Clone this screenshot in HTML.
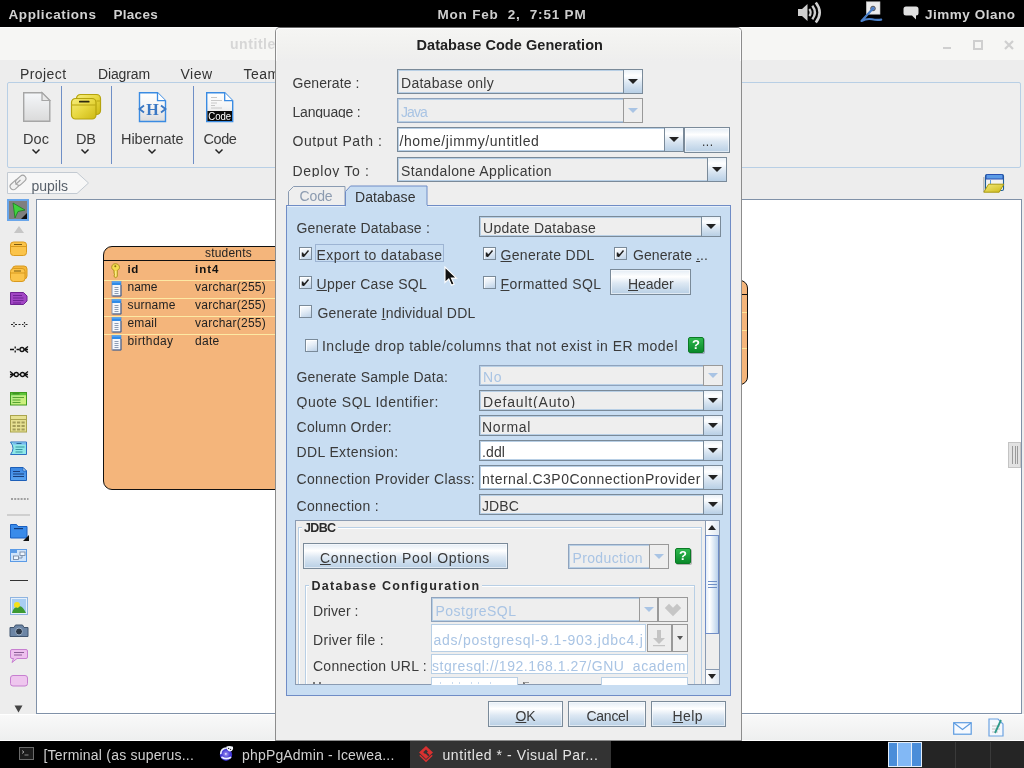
<!DOCTYPE html>
<html><head><meta charset="utf-8"><title>Database Code Generation</title><style>
html,body{margin:0;padding:0}
body{width:1024px;height:768px;position:relative;overflow:hidden;background:#ededed;font-family:"Liberation Sans",sans-serif;font-size:13.5px;color:#3a3a3a}
div,span,svg{box-sizing:border-box}
.a{position:absolute}
u{text-decoration:underline;text-underline-offset:1px}
.grad{background:linear-gradient(#dde8f3 0%,#ffffff 30%,#e6eef7 55%,#b8cfe5 100%)}
.btn{position:absolute;border:1px solid #7a8a99;background:linear-gradient(#e3ecf5 0%,#ffffff 28%,#dde8f3 55%,#b8cfe5 100%);box-shadow:inset 0 0 0 1px rgba(255,255,255,.55)}
.cb{position:absolute;border:1px solid #7a8a99;background:#eeeeee;box-shadow:inset 0 0 0 1px #b8cfe5}
.cb.ed{background:#fff}
.cb.dis{border-color:#8fa3bd}
.ab{position:absolute;top:-1px;right:-1px;bottom:-1px;border:1px solid #7a8a99;background:linear-gradient(#eaf1f8 0%,#ffffff 25%,#dde8f3 55%,#b8cfe5 100%)}
.ab.dis{background:#eeeeee;border-color:#999}
.tri{position:absolute;left:50%;top:50%;width:0;height:0;margin-left:-5px;margin-top:-3px;border-left:5px solid transparent;border-right:5px solid transparent;border-top:5px solid #222}
.tri.dis{border-top-color:#a9c4e4}
.chk{position:absolute;width:13px;height:13px;border:1px solid #7a8a99;background:linear-gradient(160deg,#ffffff 0%,#e6eef7 45%,#bdd2e8 100%);box-shadow:inset 1px 1px 0 rgba(255,255,255,.8)}
.q{position:absolute;width:16px;height:16px;border-radius:2px;background:linear-gradient(#2fb84f,#0a8a2a);border:1px solid #0a7a25;box-shadow:1px 1px 0 rgba(0,0,0,.25);color:#fff;font-weight:bold;font-size:13px;line-height:14px;text-align:center}
</style></head><body><div id="root" style="position:absolute;left:0;top:0;width:1024px;height:768px;will-change:transform"><div style="position:absolute;left:0px;top:0px;width:1024px;height:27px;background:#000"></div><span style="position:absolute;left:8.50px;top:6px;font-size:13.5px;line-height:18px;white-space:pre;color:#d2d2d2;font-weight:bold;letter-spacing:0.582px;">Applications</span><span style="position:absolute;left:113.50px;top:6px;font-size:13.5px;line-height:18px;white-space:pre;color:#d2d2d2;font-weight:bold;letter-spacing:0.284px;">Places</span><span style="position:absolute;left:437.50px;top:6px;font-size:13.5px;line-height:18px;white-space:pre;color:#cecece;font-weight:bold;letter-spacing:0.811px;">Mon Feb  2,  7:51 PM</span><span style="position:absolute;left:925.00px;top:6px;font-size:13.5px;line-height:18px;white-space:pre;color:#d2d2d2;font-weight:bold;letter-spacing:0.520px;">Jimmy Olano</span><svg class="a" style="left:797px;top:1px" width="26" height="24" viewBox="0 0 26 24"><path d="M1 8h4l5.500-5v17l-5.500-5H1z" fill="#cfcfcf"/><path d="M12.300 8q2.800 3.500 0 7" fill="none" stroke="#cfcfcf" stroke-width="2.200"/><path d="M15.300 4.700q5.200 6.800 0 13.600" fill="none" stroke="#cfcfcf" stroke-width="2.400"/><path d="M18.800 1.500q7.800 10 0 20" fill="none" stroke="#cfcfcf" stroke-width="2.600"/></svg><svg class="a" style="left:859px;top:1px" width="24" height="23" viewBox="0 0 24 23"><rect x="7.300" y=".8" width="13.700" height="12.400" fill="#ececec" stroke="#bdbdbd" stroke-width=".6"/><circle cx="14" cy="7.500" r="2.300" fill="#6a8fd0" stroke="#555" stroke-width="1"/><path d="M14 7.500L2.500 20q5.500-2.800 10.500-1.700t9.200.3" fill="none" stroke="#4a7fc8" stroke-width="2.200" stroke-linecap="round" stroke-linejoin="round"/></svg><svg class="a" style="left:903px;top:6px" width="16" height="15" viewBox="0 0 16 15"><path d="M3 .5h10q2.500 0 2.500 2.500v4q0 2.500-2.500 2.500v4l-4-4H3Q.5 9.500.5 7V3Q.5.5 3 .5z" fill="#e0e0e0"/></svg><div style="position:absolute;left:0px;top:27px;width:1024px;height:33px;background:#f6f6f4;border-top:1px solid #fdfdfd"></div><span style="position:absolute;left:230.00px;top:35px;font-size:14px;line-height:18px;white-space:pre;color:#d6d6d6;font-weight:bold;letter-spacing:0.557px;">untitled</span><div style="position:absolute;left:943px;top:47px;width:8px;height:2px;background:#cfcfcf"></div><div style="position:absolute;left:973px;top:40px;width:10px;height:10px;border:2px solid #cfcfcf"></div><svg class="a" style="left:1003px;top:39px" width="12" height="12" viewBox="0 0 12 12"><path d="M2 2l8 8M10 2l-8 8" stroke="#cfcfcf" stroke-width="2.200" fill="none"/></svg><div style="position:absolute;left:0px;top:60px;width:1024px;height:681px;background:#ededed"></div><div style="position:absolute;left:7px;top:82px;width:1014px;height:86px;border:1px solid #b8cfe5;border-radius:2px;background:#eeeeee"></div><span style="position:absolute;left:20.00px;top:65px;font-size:14px;line-height:18px;white-space:pre;color:#333;letter-spacing:0.417px;">Project</span><span style="position:absolute;left:98.00px;top:65px;font-size:14px;line-height:18px;white-space:pre;color:#333;letter-spacing:-0.129px;">Diagram</span><span style="position:absolute;left:180.50px;top:65px;font-size:14px;line-height:18px;white-space:pre;color:#333;letter-spacing:0.477px;">View</span><span style="position:absolute;left:243.50px;top:65px;font-size:14px;line-height:18px;white-space:pre;color:#333;letter-spacing:0.441px;">Team</span><div style="position:absolute;left:61px;top:86px;width:1px;height:78px;background:#6f8fc6"></div><div style="position:absolute;left:111px;top:86px;width:1px;height:78px;background:#6f8fc6"></div><div style="position:absolute;left:193px;top:86px;width:1px;height:78px;background:#6f8fc6"></div><svg class="a" style="left:22px;top:91px" width="30" height="32" viewBox="0 0 30 32"><defs><linearGradient id="gdoc" x1="0" y1="0" x2="0" y2="1"><stop offset="0" stop-color="#f5f7fa"/><stop offset="1" stop-color="#dadada"/></linearGradient><linearGradient id="gdb" x1="0" y1="0" x2="1" y2="1"><stop offset="0" stop-color="#f6ec7c"/><stop offset=".5" stop-color="#e8d840"/><stop offset="1" stop-color="#cdb914"/></linearGradient><linearGradient id="gpg" x1="0" y1="0" x2="0" y2="1"><stop offset="0" stop-color="#ffffff"/><stop offset=".5" stop-color="#f4f4f4"/><stop offset="1" stop-color="#dcdcdc"/></linearGradient></defs><path d="M1.700 1.700h18.300l7.800 7.800v20.800h-26.100z" fill="url(#gdoc)" stroke="#a6a6a6" stroke-width="1.400"/><path d="M20 1.700v7.800h7.800z" fill="#e9e9e9" stroke="#a6a6a6" stroke-width="1.200"/></svg><svg class="a" style="left:70px;top:93px" width="32" height="28" viewBox="0 0 32 28"><rect x="6.500" y="1.500" width="24" height="20" rx="4" fill="url(#gdb)" stroke="#b5a30e" stroke-width="1.200"/><rect x="1.500" y="5.500" width="24.500" height="20.500" rx="4" fill="url(#gdb)" stroke="#b5a30e" stroke-width="1.200"/><path d="M1.500 12h24.500" stroke="#bfae1a" stroke-width="1.200"/><path d="M26.500 8h4" stroke="#bfae1a" stroke-width="1.200"/><rect x="9" y="7.700" width="10.500" height="1.800" rx=".6" fill="#2e2a10"/></svg><svg class="a" style="left:137px;top:91px" width="32" height="32" viewBox="0 0 32 32"><path d="M2.500 1.700h18l8 8v20.800h-26z" fill="url(#gpg)" stroke="#3a8be2" stroke-width="1.400"/><path d="M20.500 1.700v8h8" fill="#fff" stroke="#3a8be2" stroke-width="1.300"/><text x="15.500" y="23.500" font-family="Liberation Serif,serif" font-weight="bold" font-size="16" fill="#3a78c4" text-anchor="middle">H</text><path d="M7 14.500l-4.500 3.500 4.500 3.500M24 14.500l4.500 3.500-4.500 3.500" fill="none" stroke="#3a78c4" stroke-width="1.800"/></svg><svg class="a" style="left:205px;top:91px" width="30" height="32" viewBox="0 0 30 32"><path d="M1.700 1.700h18l8 8v20.800h-26z" fill="url(#gpg)" stroke="#3a8be2" stroke-width="1.400"/><path d="M19.700 1.700v8h8" fill="#fff" stroke="#3a8be2" stroke-width="1.300"/><path d="M6 6.500h6M6 9.500h11M6 12h6M6 14.500h4M6 17h11" stroke="#c2c2c2" stroke-width=".9"/><rect x="2.400" y="20" width="24.600" height="10" fill="#0a0a0a"/><text x="14.700" y="28.800" font-family="Liberation Sans,sans-serif" font-size="10.500" fill="#fff" text-anchor="middle" textLength="23" lengthAdjust="spacingAndGlyphs">Code</text></svg><span style="position:absolute;left:23.00px;top:130px;font-size:14.5px;line-height:19px;white-space:pre;color:#3a3a3a;letter-spacing:0.068px;">Doc</span><span style="position:absolute;left:76.00px;top:130px;font-size:14.5px;line-height:19px;white-space:pre;color:#3a3a3a;letter-spacing:-0.328px;">DB</span><span style="position:absolute;left:121.00px;top:130px;font-size:14.5px;line-height:19px;white-space:pre;color:#3a3a3a;letter-spacing:-0.042px;">Hibernate</span><span style="position:absolute;left:203.50px;top:130px;font-size:14.5px;line-height:19px;white-space:pre;color:#3a3a3a;letter-spacing:-0.418px;">Code</span><svg class="a" style="left:30.5px;top:148px" width="10" height="7" viewBox="0 0 10 7"><path d="M1.500 1.500L5 5l3.500-3.500" fill="none" stroke="#222" stroke-width="1.500"/></svg><svg class="a" style="left:80px;top:148px" width="10" height="7" viewBox="0 0 10 7"><path d="M1.500 1.500L5 5l3.500-3.500" fill="none" stroke="#222" stroke-width="1.500"/></svg><svg class="a" style="left:146.5px;top:148px" width="10" height="7" viewBox="0 0 10 7"><path d="M1.500 1.500L5 5l3.500-3.500" fill="none" stroke="#222" stroke-width="1.500"/></svg><svg class="a" style="left:213.5px;top:148px" width="10" height="7" viewBox="0 0 10 7"><path d="M1.500 1.500L5 5l3.500-3.500" fill="none" stroke="#222" stroke-width="1.500"/></svg><svg class="a" style="left:7px;top:172px" width="84" height="23" viewBox="0 0 84 23"><path d="M.5.500h69.500l11.500 10.500-11.500 10.500H.5z" fill="#f7f7f7" stroke="#c3cad2"/><g fill="#f1f1f1" stroke="#a2a2a2" stroke-width="1.100"><rect x="2.500" y="9.500" width="11.500" height="6.500" rx="3.200" transform="rotate(-42 8.200 12.700)"/><rect x="8" y="5" width="11.500" height="6.500" rx="3.200" transform="rotate(-42 13.700 8.200)"/></g><path d="M8.500 12.500l5-4.500" stroke="#a2a2a2" stroke-width="1.100"/></svg><span style="position:absolute;left:31.50px;top:177px;font-size:14px;line-height:18px;white-space:pre;color:#58606a;letter-spacing:-0.016px;">pupils</span><svg class="a" style="left:982px;top:173px" width="24" height="22" viewBox="0 0 24 22"><defs><linearGradient id="gnav" x1="0" y1="0" x2="1" y2="1"><stop offset="0" stop-color="#f3ea7a"/><stop offset="1" stop-color="#cdb91a"/></linearGradient></defs><path d="M1.800 4v15" stroke="#b8b8b8" stroke-width="1.400"/><rect x="3.500" y="1.500" width="18" height="16" rx="1.500" fill="#f2f2f2" stroke="#1f5f96" stroke-width="1.100"/><path d="M4 6V3q0-1.500 1.500-1.500h14q1.500 0 1.500 1.500v3z" fill="#5b9be6" stroke="#2a4fb0"/><path d="M8.500 7v4" stroke="#5b9be6"/><path d="M1.800 19.200l4.800-8h15.200l-4.600 8z" fill="url(#gnav)" stroke="#a89a10"/></svg><div style="position:absolute;left:7px;top:199px;width:22px;height:22px;background:#7f7f7f;border:2px solid #6aa6ea"></div><svg class="a" style="left:9px;top:201px" width="20" height="20" viewBox="0 0 20 20"><path d="M4 2l12 7-7 1.500L6 17z" fill="#3fd23f" stroke="#1d7f1d" stroke-width=".8"/><path d="M18 12v6h-6z" fill="#111"/></svg><svg class="a" style="left:13px;top:225px" width="12" height="9" viewBox="0 0 12 9"><path d="M1 8l5-7 5 7z" fill="#c6c6c6"/></svg><svg class="a" style="left:9px;top:241px" width="20" height="16" viewBox="0 0 20 16"><rect x="1.500" y="1" width="16" height="13.500" rx="3" fill="#fbc44a" stroke="#d99a1e"/><path d="M2 5.500h15" stroke="#d99a1e"/><rect x="5" y="3" width="8" height="1" fill="#7a5a10"/></svg><svg class="a" style="left:9px;top:265px" width="20" height="18" viewBox="0 0 20 18"><rect x="3.500" y="1" width="14.500" height="13" rx="3" fill="#f4b73a" stroke="#d99a1e"/><rect x="1.500" y="3.500" width="14.500" height="13" rx="3" fill="#fbc44a" stroke="#d99a1e"/><path d="M2 8h14" stroke="#d99a1e"/><rect x="5" y="5.500" width="7" height="1" fill="#7a5a10"/></svg><svg class="a" style="left:9px;top:291px" width="20" height="16" viewBox="0 0 20 16"><path d="M1.500 1.500h13l3.500 3.500v5l-3.500 3.500h-13z" fill="#a246c4" stroke="#6e2391"/><path d="M4 4.500h9M4 7h10.500M4 9.500h10.500M4 12h8" stroke="#6a2090" stroke-width=".9"/></svg><svg class="a" style="left:9px;top:319px" width="22" height="11" viewBox="0 0 22 11"><path d="M2 5.500h2M6 5.500h2M9.500 5.500h2M13 5.500h1.500M16.500 5.500h2M5 3v1.500M5 6.500v1.500M15.500 3v1.500M15.500 6.500v1.500" stroke="#222" stroke-width="1.200" fill="none"/></svg><svg class="a" style="left:9px;top:344px" width="22" height="11" viewBox="0 0 22 11"><path d="M1 5.500h4M7.500 5.500h3M6.200 2.500v2M6.200 6.500v2M15 5.500h4M15.200 5.500l3.800-3M15.200 5.500l3.800 3" stroke="#111" stroke-width="1.300" fill="none"/><circle cx="13" cy="5.500" r="2" fill="none" stroke="#111" stroke-width="1.300"/></svg><svg class="a" style="left:9px;top:369px" width="22" height="11" viewBox="0 0 22 11"><path d="M1 5.500h4M4.800 5.500l-3.800-3M4.800 5.500l-3.800 3M9.500 5.500h2M15.500 5.500h3.500M15.200 5.500l3.800-3M15.200 5.500l3.800 3" stroke="#111" stroke-width="1.300" fill="none"/><circle cx="7.300" cy="5.500" r="2" fill="none" stroke="#111" stroke-width="1.300"/><circle cx="13.500" cy="5.500" r="2" fill="none" stroke="#111" stroke-width="1.300"/></svg><svg class="a" style="left:9px;top:391px" width="20" height="16" viewBox="0 0 20 16"><defs><linearGradient id="ggr" x1="0" y1="0" x2="1" y2="1"><stop offset="0" stop-color="#a8e88a"/><stop offset="1" stop-color="#d6f27a"/></linearGradient></defs><rect x="1.500" y="1.500" width="16" height="12.500" fill="url(#ggr)" stroke="#3f9a1e"/><rect x="2" y="2" width="15" height="2.200" fill="#5cc43a"/><path d="M3.500 2.800h7" stroke="#2f7a1a" stroke-width=".9"/><path d="M3.500 6.500h11.500M3.500 9h8M3.500 11.500h8" stroke="#4a9a2a" stroke-width=".9"/></svg><svg class="a" style="left:9px;top:414px" width="20" height="20" viewBox="0 0 20 20"><rect x="1.500" y="1.500" width="16" height="16.500" fill="#e6e192" stroke="#aaa44e"/><path d="M2 5.500h15" stroke="#aaa44e"/><g fill="#a39d58"><rect x="3.500" y="7.500" width="3.200" height="2"/><rect x="8" y="7.500" width="3.200" height="2"/><rect x="12.500" y="7.500" width="3.200" height="2"/><rect x="3.500" y="11" width="3.200" height="2"/><rect x="8" y="11" width="3.200" height="2"/><rect x="12.500" y="11" width="3.200" height="2"/><rect x="3.500" y="14.500" width="3.200" height="2"/><rect x="8" y="14.500" width="3.200" height="2"/><rect x="12.500" y="14.500" width="3.200" height="2"/></g></svg><svg class="a" style="left:9px;top:440px" width="20" height="17" viewBox="0 0 20 17"><path d="M1.500 2h16v12.500h-16q5-6.200 0-12.500z" fill="#8fe8e8" stroke="#2b6fc0"/><path d="M3.500 2.500h13.500v2H4.500z" fill="#7ab8f0"/><path d="M7.500 3.500h5" stroke="#1f5a8a" stroke-width=".9"/><path d="M6.500 7h9M6.500 9.500h7M6.500 12h7" stroke="#2a8a9a" stroke-width=".9"/></svg><svg class="a" style="left:9px;top:466px" width="20" height="16" viewBox="0 0 20 16"><defs><linearGradient id="gbl" x1="0" y1="0" x2="0" y2="1"><stop offset="0" stop-color="#3a86e2"/><stop offset="1" stop-color="#5aa4f0"/></linearGradient></defs><path d="M1.500 1.500h12.500l3.500 3.500v9.500h-16z" fill="url(#gbl)" stroke="#1d5fb8"/><path d="M14 1.500v3.500h3.500z" fill="#cfe4fb" stroke="#1d5fb8" stroke-width=".8"/><path d="M4 5.500h7M4 8h11M4 10.500h11" stroke="#1a3f7a" stroke-width="1"/></svg><svg class="a" style="left:10px;top:497px" width="20" height="4" viewBox="0 0 20 4"><path d="M1 2h17.500" stroke="#555" stroke-width="1.200" stroke-dasharray="2 1.200"/></svg><div style="position:absolute;left:7px;top:514px;width:23px;height:2px;background:#cfcfcf"></div><svg class="a" style="left:9px;top:523px" width="21" height="19" viewBox="0 0 21 19"><path d="M1.500 1.500h6l1.500 2h9v11.500h-16.500z" fill="#3a8bea" stroke="#1a5fc0"/><rect x="5" y="5" width="9" height="1.200" fill="#123a7a"/><path d="M20 12v6h-6z" fill="#111"/></svg><svg class="a" style="left:9px;top:548px" width="20" height="16" viewBox="0 0 20 16"><rect x="1.500" y="1.500" width="16" height="12" fill="#cfe4fb" stroke="#5b9be6"/><rect x="2" y="2" width="6" height="3" fill="#5b9be6"/><rect x="4.500" y="8" width="5" height="3.500" fill="#eef6ff" stroke="#6d7f99" stroke-width=".8"/><rect x="11" y="4" width="5" height="3.500" fill="#eef6ff" stroke="#6d7f99" stroke-width=".8"/><path d="M9.500 10h3.500V7.500" fill="none" stroke="#6d7f99" stroke-width=".8"/></svg><div style="position:absolute;left:10px;top:580px;width:18px;height:1px;background:#333"></div><svg class="a" style="left:9px;top:596px" width="20" height="20" viewBox="0 0 20 20"><rect x="1.500" y="1.500" width="17" height="17" fill="#e6f0fb" stroke="#8fb4e0"/><rect x="3" y="3" width="14" height="14" fill="#a8cdf2"/><circle cx="8" cy="9" r="3" fill="#f5e11a"/><path d="M3 17q2-7 6-5 3-5 8 5z" fill="#3c9a32"/></svg><svg class="a" style="left:9px;top:624px" width="20" height="14" viewBox="0 0 20 14"><path d="M1 3.500h4l1.500-2.500h7l1.500 2.500h4v9h-18z" fill="#6d86a6" stroke="#41556f"/><circle cx="10" cy="7.500" r="3.500" fill="#2e3a49" stroke="#9fb2c9"/></svg><svg class="a" style="left:9px;top:648px" width="20" height="17" viewBox="0 0 20 17"><path d="M3 1.500h14q1.500 0 1.500 1.500v6q0 1.500-1.500 1.500H8l-5 4 1.500-4H3q-1.500 0-1.500-1.500v-6q0-1.500 1.500-1.500z" fill="#eec0ee" stroke="#c77fd0"/><path d="M5 4.500h10M5 7h8" stroke="#8a5f95" stroke-width="1"/></svg><svg class="a" style="left:9px;top:674px" width="20" height="14" viewBox="0 0 20 14"><rect x="1.500" y="1.500" width="17" height="10.500" rx="2.500" fill="#eec6ee" stroke="#c77fd0"/></svg><svg class="a" style="left:14px;top:705px" width="10" height="8" viewBox="0 0 10 8"><path d="M.5.500h8L4.500 7.500z" fill="#444"/></svg><div style="position:absolute;left:36px;top:199px;width:986px;height:515px;background:#fff;border:1px solid #8091a8"></div><div style="position:absolute;left:1008px;top:442px;width:13px;height:26px;background:#e2e2e2;border:1px solid #c4c4c4"></div><div style="position:absolute;left:1012px;top:446px;width:1px;height:18px;background:#9a9a9a"></div><div style="position:absolute;left:1014.5px;top:446px;width:1px;height:18px;background:#9a9a9a"></div><div style="position:absolute;left:1017px;top:446px;width:1px;height:18px;background:#9a9a9a"></div><div style="position:absolute;left:103px;top:246px;width:300px;height:244px;background:#f4b57b;border:1px solid #111;border-radius:9px"></div><div style="position:absolute;left:104px;top:260px;width:298px;height:1px;background:#111"></div><div style="position:absolute;left:104px;top:280px;width:298px;height:1px;background:#fde9a4"></div><div style="position:absolute;left:104px;top:298px;width:298px;height:1px;background:#fde9a4"></div><div style="position:absolute;left:104px;top:316px;width:298px;height:1px;background:#fde9a4"></div><div style="position:absolute;left:104px;top:334px;width:298px;height:1px;background:#fde9a4"></div><span style="position:absolute;left:205.00px;top:245px;font-size:12px;line-height:16px;white-space:pre;color:#222;letter-spacing:0.203px;">students</span><span style="position:absolute;left:127.50px;top:262px;font-size:11.5px;line-height:15px;white-space:pre;color:#111;font-weight:bold;letter-spacing:0.633px;">id</span><span style="position:absolute;left:195.00px;top:262px;font-size:11.5px;line-height:15px;white-space:pre;color:#111;font-weight:bold;letter-spacing:1.012px;">int4</span><span style="position:absolute;left:127.50px;top:279px;font-size:12px;line-height:16px;white-space:pre;color:#222;letter-spacing:-0.008px;">name</span><span style="position:absolute;left:127.50px;top:297px;font-size:12px;line-height:16px;white-space:pre;color:#222;letter-spacing:0.188px;">surname</span><span style="position:absolute;left:127.50px;top:315px;font-size:12px;line-height:16px;white-space:pre;color:#222;letter-spacing:0.163px;">email</span><span style="position:absolute;left:127.50px;top:333px;font-size:12px;line-height:16px;white-space:pre;color:#222;letter-spacing:0.412px;">birthday</span><span style="position:absolute;left:195.00px;top:279px;font-size:12px;line-height:16px;white-space:pre;color:#222;letter-spacing:0.247px;">varchar(255)</span><span style="position:absolute;left:195.00px;top:297px;font-size:12px;line-height:16px;white-space:pre;color:#222;letter-spacing:0.247px;">varchar(255)</span><span style="position:absolute;left:195.00px;top:315px;font-size:12px;line-height:16px;white-space:pre;color:#222;letter-spacing:0.247px;">varchar(255)</span><span style="position:absolute;left:195.00px;top:333px;font-size:12px;line-height:16px;white-space:pre;color:#222;letter-spacing:0.285px;">date</span><svg class="a" style="left:110px;top:263px" width="12" height="16" viewBox="0 0 12 16"><path d="M5.300 .7c2.600 0 4.200 1.600 4.200 3.600 0 1.500-.9 2.500-2.200 3v6.200l-1.700 1.200-1.600-1.200v-1.200l1-.8-1-.9v-3.300c-1.400-.5-2.300-1.500-2.300-3 0-2 1.400-3.600 3.600-3.600z" fill="#f3dc4e" stroke="#a98c1c" stroke-width=".9"/><circle cx="5.300" cy="3.300" r="1" fill="#8a6f12"/><path d="M5.800 8v5.500" stroke="#fff6b0" stroke-width=".8"/></svg><svg class="a" style="left:111px;top:281px" width="11" height="16" viewBox="0 0 11 16"><rect x="1" y=".5" width="9" height="14.500" fill="#f4f7fb" stroke="#7f8fae" stroke-width=".9"/><rect x="1" y=".5" width="9" height="3.500" fill="#2f8be8"/><path d="M1 1h9" stroke="#6cb4f6"/><path d="M3.500 6.500h4M3.500 8.500h4M3.500 10.500h4M3.500 12.500h4" stroke="#8e9db4" stroke-width="1"/><path d="M10 4v11H1.500" fill="none" stroke="#4f5f80" stroke-width="1"/></svg><svg class="a" style="left:111px;top:299px" width="11" height="16" viewBox="0 0 11 16"><rect x="1" y=".5" width="9" height="14.500" fill="#f4f7fb" stroke="#7f8fae" stroke-width=".9"/><rect x="1" y=".5" width="9" height="3.500" fill="#2f8be8"/><path d="M1 1h9" stroke="#6cb4f6"/><path d="M3.500 6.500h4M3.500 8.500h4M3.500 10.500h4M3.500 12.500h4" stroke="#8e9db4" stroke-width="1"/><path d="M10 4v11H1.500" fill="none" stroke="#4f5f80" stroke-width="1"/></svg><svg class="a" style="left:111px;top:317px" width="11" height="16" viewBox="0 0 11 16"><rect x="1" y=".5" width="9" height="14.500" fill="#f4f7fb" stroke="#7f8fae" stroke-width=".9"/><rect x="1" y=".5" width="9" height="3.500" fill="#2f8be8"/><path d="M1 1h9" stroke="#6cb4f6"/><path d="M3.500 6.500h4M3.500 8.500h4M3.500 10.500h4M3.500 12.500h4" stroke="#8e9db4" stroke-width="1"/><path d="M10 4v11H1.500" fill="none" stroke="#4f5f80" stroke-width="1"/></svg><svg class="a" style="left:111px;top:335px" width="11" height="16" viewBox="0 0 11 16"><rect x="1" y=".5" width="9" height="14.500" fill="#f4f7fb" stroke="#7f8fae" stroke-width=".9"/><rect x="1" y=".5" width="9" height="3.500" fill="#2f8be8"/><path d="M1 1h9" stroke="#6cb4f6"/><path d="M3.500 6.500h4M3.500 8.500h4M3.500 10.500h4M3.500 12.500h4" stroke="#8e9db4" stroke-width="1"/><path d="M10 4v11H1.500" fill="none" stroke="#4f5f80" stroke-width="1"/></svg><div style="position:absolute;left:700px;top:280px;width:48px;height:105px;background:#f4b57b;border:1px solid #111;border-radius:8px"></div><div style="position:absolute;left:701px;top:294px;width:46px;height:1px;background:#111"></div><div style="position:absolute;left:741px;top:312px;width:6px;height:1px;background:#fbe596"></div><div style="position:absolute;left:741px;top:330px;width:6px;height:1px;background:#fbe596"></div><div style="position:absolute;left:741px;top:348px;width:6px;height:1px;background:#fbe596"></div><div style="position:absolute;left:0px;top:714px;width:1024px;height:27px;background:linear-gradient(#f9f9f9,#eeefef);border-top:1px solid #fff;border-bottom:1px solid #fff"></div><svg class="a" style="left:953px;top:721px" width="20" height="15" viewBox="0 0 20 15"><rect x=".7" y="1.700" width="17.500" height="11.500" fill="#f6faff" stroke="#5d9be0" stroke-width="1.200"/><path d="M1 2l8.500 6.500L18 2" fill="none" stroke="#5d9be0" stroke-width="1.200"/></svg><svg class="a" style="left:988px;top:718px" width="17" height="19" viewBox="0 0 17 19"><path d="M1 1h9l5 5v12H1z" fill="#f4f8fd" stroke="#6da3e2" stroke-width="1.200"/><path d="M4 8h8M4 11h8M4 14h6" stroke="#c2c2c2"/><path d="M13 2L7 15" stroke="#2e9a8a" stroke-width="1.800"/></svg><div style="position:absolute;left:0px;top:741px;width:1024px;height:27px;background:#000"></div><div style="position:absolute;left:410px;top:741px;width:201px;height:27px;background:#333333"></div><svg class="a" style="left:19px;top:747px" width="15" height="13" viewBox="0 0 15 13"><rect x=".5" y=".5" width="14" height="12" fill="#1c1c1c" stroke="#6a6a6a"/><path d="M3 3.500l2 1.500-2 1.500" stroke="#bbb" fill="none" stroke-width=".8"/><rect x="5.500" y="7.500" width="4" height="1" fill="#888"/></svg><span style="position:absolute;left:43.50px;top:746px;font-size:14px;line-height:18px;white-space:pre;color:#d0d0d0;letter-spacing:0.208px;">[Terminal (as superus...</span><svg class="a" style="left:219px;top:745px" width="16" height="17" viewBox="0 0 16 17"><defs><radialGradient id="gice" cx=".5" cy=".45" r=".6"><stop offset="0" stop-color="#a79cf2"/><stop offset=".55" stop-color="#4a3fd8"/><stop offset="1" stop-color="#2a20c0"/></radialGradient></defs><circle cx="7" cy="9.700" r="6.200" fill="url(#gice)"/><path d="M1.800 8.500Q2 3.500 7.500 3" fill="none" stroke="#e8ecfa" stroke-width="1.700" stroke-linecap="round"/><path d="M7.500 1.500q3-1 6.500.3.700 2-1.200 4.200l-2.300.6q-3-1.200-3-5.100z" fill="#f6f8ff"/><circle cx="9.600" cy="3.400" r=".7" fill="#333"/><circle cx="11.500" cy="4.400" r=".7" fill="#333"/><path d="M3 12.300q4 2.700 8.500.2" fill="none" stroke="#eef2ff" stroke-width="1.700" stroke-linecap="round"/><circle cx="6.800" cy="8.800" r=".9" fill="#e6e0ff"/></svg><span style="position:absolute;left:242.00px;top:746px;font-size:14px;line-height:18px;white-space:pre;color:#d0d0d0;letter-spacing:0.175px;">phpPgAdmin - Icewea...</span><svg class="a" style="left:418px;top:745px" width="16" height="18" viewBox="0 0 16 18"><path d="M8 1l7 6.500L8 14 1 7.500z" fill="#d93030"/><path d="M8 4.600l1.900 1.800-1 1 2.600 2.600-1.300 1.200-2.600-2.600-.5.400-1.900-1.800z" fill="#333333"/><path d="M1.800 10.300l6.200 5.800 6.200-5.800" fill="none" stroke="#d93030" stroke-width="1.500"/></svg><span style="position:absolute;left:442.50px;top:746px;font-size:14px;line-height:18px;white-space:pre;color:#e4e4e4;letter-spacing:0.562px;">untitled * - Visual Par...</span><div style="position:absolute;left:888px;top:741px;width:136px;height:27px;background:#252525"></div><div style="position:absolute;left:888px;top:742px;width:34px;height:25px;background:#4a8dd9;border:1px solid #e4eefa"></div><div style="position:absolute;left:897px;top:743px;width:15px;height:23px;background:#82b8f5;border-left:1px solid #e4eefa;border-right:1px solid #e4eefa"></div><div style="position:absolute;left:955px;top:742px;width:1px;height:26px;background:#3a3a3a"></div><div style="position:absolute;left:989.5px;top:742px;width:1px;height:26px;background:#3a3a3a"></div><div style="position:absolute;left:275px;top:27px;width:467px;height:714px;background:#eeeeee;border-radius:5px 5px 0 0;border:1px solid #8c8c8c;border-top-color:#6a6a6a"></div><div style="position:absolute;left:276px;top:28px;width:465px;height:33px;background:linear-gradient(#f5f5f3,#f1f1ef 60%,#eeeeee);border-radius:4px 4px 0 0;border-top:1px solid #ffffff;border-left:1px solid #fbfbfb;border-right:1px solid #fbfbfb"></div><span style="position:absolute;left:416.50px;top:36px;font-size:14.5px;line-height:19px;white-space:pre;color:#222;font-weight:bold;letter-spacing:0.049px;">Database Code Generation</span><span style="position:absolute;left:292.50px;top:74px;font-size:14px;line-height:18px;white-space:pre;color:#3a3a3a;letter-spacing:0.084px;">Generate :</span><div class="cb" style="left:397px;top:69px;width:246px;height:25px"><div class="ab" style="width:20px"><div class="tri"></div></div></div><div class="a" style="left:0;top:0;width:622px;height:91px;overflow:hidden"><span style="position:absolute;left:401.00px;top:74px;font-size:14px;line-height:18px;white-space:pre;color:#3a3a3a;letter-spacing:0.268px;">Database only</span></div><div class="a" style="left:0;top:0;width:1024px;height:117.5px;overflow:hidden"><span style="position:absolute;left:292.50px;top:103px;font-size:14px;line-height:18px;white-space:pre;color:#3a3a3a;letter-spacing:-0.208px;">Language :</span></div><div class="cb dis" style="left:397px;top:98px;width:246px;height:25px"><div class="ab dis" style="width:20px"><div class="tri dis"></div></div></div><div class="a" style="left:0;top:0;width:622px;height:120px;overflow:hidden"><span style="position:absolute;left:401.00px;top:103px;font-size:14px;line-height:18px;white-space:pre;color:#a9c4e4;letter-spacing:-0.895px;">Java</span></div><div class="a" style="left:0;top:0;width:1024px;height:147px;overflow:hidden"><span style="position:absolute;left:292.50px;top:132px;font-size:14px;line-height:18px;white-space:pre;color:#3a3a3a;letter-spacing:0.577px;">Output Path :</span></div><div class="cb ed" style="left:397px;top:127px;width:287px;height:25px"><div class="ab" style="width:20px"><div class="tri"></div></div></div><div class="a" style="left:0;top:0;width:663px;height:149px;overflow:hidden"><span style="position:absolute;left:399.50px;top:132px;font-size:14px;line-height:18px;white-space:pre;color:#3a3a3a;letter-spacing:0.580px;">/home/jimmy/untitled</span></div><div class="btn" style="left:684px;top:127px;width:46px;height:26px"></div><span style="position:absolute;left:702.00px;top:134px;font-size:12px;line-height:16px;white-space:pre;color:#333;letter-spacing:0.495px;">...</span><div class="a" style="left:0;top:0;width:1024px;height:176.5px;overflow:hidden"><span style="position:absolute;left:292.50px;top:162px;font-size:14px;line-height:18px;white-space:pre;color:#3a3a3a;letter-spacing:0.656px;">Deploy To :</span></div><div class="cb" style="left:397px;top:157px;width:330px;height:25px"><div class="ab" style="width:20px"><div class="tri"></div></div></div><div class="a" style="left:0;top:0;width:706px;height:179px;overflow:hidden"><span style="position:absolute;left:401.00px;top:162px;font-size:14px;line-height:18px;white-space:pre;color:#3a3a3a;letter-spacing:0.388px;">Standalone Application</span></div><svg class="a" style="left:286px;top:185px" width="146" height="23" viewBox="0 0 146 23"><path d="M2.500 20.500v-14l5-5h51.500v19" fill="#eeeeee" stroke="#8a9bb2"/><path d="M59.500 22v-15.500l5-5.500h76.500v21" fill="#c8ddf2" stroke="#6f8cc6"/></svg><span style="position:absolute;left:299.50px;top:187px;font-size:14px;line-height:18px;white-space:pre;color:#8c9bb0;letter-spacing:-0.117px;">Code</span><span style="position:absolute;left:355.00px;top:188px;font-size:14px;line-height:18px;white-space:pre;color:#333;letter-spacing:0.070px;">Database</span><div style="position:absolute;left:286px;top:205px;width:445px;height:491px;background:#c8ddf2;border:1px solid #6f8cc6"></div><div style="position:absolute;left:346px;top:205px;width:81px;height:1px;background:#c8ddf2"></div><div style="position:absolute;left:287px;top:206px;width:58px;height:1px;background:#e6eff9"></div><div style="position:absolute;left:428px;top:206px;width:302px;height:1px;background:#e6eff9"></div><span style="position:absolute;left:296.50px;top:219px;font-size:14px;line-height:18px;white-space:pre;color:#3a3a3a;letter-spacing:0.185px;">Generate Database :</span><div class="cb" style="left:479px;top:216px;width:242px;height:21px"><div class="ab" style="width:20px"><div class="tri"></div></div></div><div class="a" style="left:0;top:0;width:700px;height:234px;overflow:hidden"><span style="position:absolute;left:483.00px;top:219px;font-size:14px;line-height:18px;white-space:pre;color:#3a3a3a;letter-spacing:0.269px;">Update Database</span></div><div class="chk" style="left:299px;top:247px"><svg class="a" style="left:1px;top:1px" width="9" height="9" viewBox="0 0 9 9"><path d="M1.500 3.500v4M2.500 4.500v3.500M3 7l4.500-5.500" stroke="#222" stroke-width="1.450" fill="none"/></svg></div><div style="position:absolute;left:315px;top:244px;width:129px;height:18px;border:1px solid #9db4d3"></div><span style="position:absolute;left:316.50px;top:246px;font-size:14px;line-height:18px;white-space:pre;color:#3a3a3a;letter-spacing:0.470px;">Export to database</span><div class="chk" style="left:483px;top:247px"><svg class="a" style="left:1px;top:1px" width="9" height="9" viewBox="0 0 9 9"><path d="M1.500 3.500v4M2.500 4.500v3.500M3 7l4.500-5.500" stroke="#222" stroke-width="1.450" fill="none"/></svg></div><span style="position:absolute;left:500.50px;top:246px;font-size:14px;line-height:18px;white-space:pre;color:#3a3a3a;letter-spacing:0.310px;"><u>G</u>enerate DDL</span><div class="chk" style="left:614px;top:247px"><svg class="a" style="left:1px;top:1px" width="9" height="9" viewBox="0 0 9 9"><path d="M1.500 3.500v4M2.500 4.500v3.500M3 7l4.500-5.500" stroke="#222" stroke-width="1.450" fill="none"/></svg></div><span style="position:absolute;left:633.00px;top:246px;font-size:14px;line-height:18px;white-space:pre;color:#3a3a3a;letter-spacing:0.089px;">Generate <u>.</u>..</span><div class="chk" style="left:299px;top:276px"><svg class="a" style="left:1px;top:1px" width="9" height="9" viewBox="0 0 9 9"><path d="M1.500 3.500v4M2.500 4.500v3.500M3 7l4.500-5.500" stroke="#222" stroke-width="1.450" fill="none"/></svg></div><span style="position:absolute;left:316.50px;top:275px;font-size:14px;line-height:18px;white-space:pre;color:#3a3a3a;letter-spacing:0.277px;"><u>U</u>pper Case SQL</span><div class="chk" style="left:483px;top:276px"></div><span style="position:absolute;left:500.50px;top:275px;font-size:14px;line-height:18px;white-space:pre;color:#3a3a3a;letter-spacing:0.406px;"><u>F</u>ormatted SQL</span><div class="btn" style="left:610px;top:269px;width:81px;height:26px"></div><span style="position:absolute;left:628.00px;top:275px;font-size:14px;line-height:18px;white-space:pre;color:#3a3a3a;letter-spacing:-0.073px;"><u>H</u>eader</span><div class="chk" style="left:299px;top:305px"></div><span style="position:absolute;left:317.50px;top:304px;font-size:14px;line-height:18px;white-space:pre;color:#3a3a3a;letter-spacing:0.203px;">Generate <u>I</u>ndividual DDL</span><div class="chk" style="left:304.5px;top:338.5px"></div><span style="position:absolute;left:322.00px;top:337px;font-size:14px;line-height:18px;white-space:pre;color:#3a3a3a;letter-spacing:0.476px;">Inclu<u>d</u>e drop table/columns that not exist in ER model</span><div class="q" style="left:688px;top:337px">?</div><div class="a" style="left:0;top:0;width:1024px;height:383.5px;overflow:hidden"><span style="position:absolute;left:296.50px;top:368px;font-size:14px;line-height:18px;white-space:pre;color:#3a3a3a;letter-spacing:0.210px;">Generate Sample Data:</span></div><div class="cb dis" style="left:479px;top:365px;width:244px;height:21px"><div class="ab dis" style="width:20px"><div class="tri dis"></div></div></div><div class="a" style="left:0;top:0;width:702px;height:383px;overflow:hidden"><span style="position:absolute;left:483.00px;top:368px;font-size:14px;line-height:18px;white-space:pre;color:#a9c4e4;letter-spacing:0.547px;">No</span></div><div class="a" style="left:0;top:0;width:1024px;height:408.5px;overflow:hidden"><span style="position:absolute;left:296.50px;top:393px;font-size:14px;line-height:18px;white-space:pre;color:#3a3a3a;letter-spacing:0.548px;">Quote SQL Identifier:</span></div><div class="cb" style="left:479px;top:390px;width:244px;height:21px"><div class="ab" style="width:20px"><div class="tri"></div></div></div><div class="a" style="left:0;top:0;width:702px;height:408px;overflow:hidden"><span style="position:absolute;left:483.00px;top:393px;font-size:14px;line-height:18px;white-space:pre;color:#3a3a3a;letter-spacing:0.809px;">Default(Auto)</span></div><div class="a" style="left:0;top:0;width:1024px;height:433.5px;overflow:hidden"><span style="position:absolute;left:296.50px;top:418px;font-size:14px;line-height:18px;white-space:pre;color:#3a3a3a;letter-spacing:0.284px;">Column Order:</span></div><div class="cb" style="left:479px;top:415px;width:244px;height:21px"><div class="ab" style="width:20px"><div class="tri"></div></div></div><div class="a" style="left:0;top:0;width:702px;height:433px;overflow:hidden"><span style="position:absolute;left:482.00px;top:418px;font-size:14px;line-height:18px;white-space:pre;color:#3a3a3a;letter-spacing:0.646px;">Normal</span></div><div class="a" style="left:0;top:0;width:1024px;height:458.5px;overflow:hidden"><span style="position:absolute;left:296.50px;top:443px;font-size:14px;line-height:18px;white-space:pre;color:#3a3a3a;letter-spacing:0.375px;">DDL Extension:</span></div><div class="cb ed" style="left:479px;top:440px;width:244px;height:21px"><div class="ab" style="width:20px"><div class="tri"></div></div></div><div class="a" style="left:0;top:0;width:702px;height:458px;overflow:hidden"><span style="position:absolute;left:482.00px;top:443px;font-size:14px;line-height:18px;white-space:pre;color:#3a3a3a;letter-spacing:0.105px;">.ddl</span></div><div class="a" style="left:0;top:0;width:1024px;height:485.5px;overflow:hidden"><span style="position:absolute;left:296.50px;top:470px;font-size:14px;line-height:18px;white-space:pre;color:#3a3a3a;letter-spacing:0.341px;">Connection Provider Class:</span></div><div class="cb ed" style="left:479px;top:465px;width:244px;height:25px"><div class="ab" style="width:20px"><div class="tri"></div></div></div><div class="a" style="left:0;top:0;width:702px;height:487px;overflow:hidden"><span style="position:absolute;left:482.00px;top:470px;font-size:14px;line-height:18px;white-space:pre;color:#3a3a3a;letter-spacing:0.477px;">nternal.C3P0ConnectionProvider</span></div><div class="a" style="left:0;top:0;width:1024px;height:512.5px;overflow:hidden"><span style="position:absolute;left:296.50px;top:497px;font-size:14px;line-height:18px;white-space:pre;color:#3a3a3a;letter-spacing:0.324px;">Connection :</span></div><div class="cb" style="left:479px;top:494px;width:244px;height:21px"><div class="ab" style="width:20px"><div class="tri"></div></div></div><div class="a" style="left:0;top:0;width:702px;height:512px;overflow:hidden"><span style="position:absolute;left:482.00px;top:497px;font-size:14px;line-height:18px;white-space:pre;color:#3a3a3a;letter-spacing:0.109px;">JDBC</span></div><div style="position:absolute;left:295px;top:519.5px;width:425px;height:165px;background:#eeeeee;border:1px solid #8a9bb2;overflow:hidden"></div><div class="a" style="left:296px;top:520.500px;width:408px;height:163px;overflow:hidden"><div style="position:absolute;left:2px;top:6.5px;width:404px;height:170px;border:1px solid #b8cfe5;box-shadow:inset 1px 1px 0 #fff"></div><div style="position:absolute;left:6px;top:1.5px;width:36px;height:12px;background:#eeeeee"></div><div style="position:absolute;left:9px;top:64.5px;width:390px;height:110px;border:1px solid #b8cfe5;box-shadow:inset 1px 1px 0 #fff"></div><div style="position:absolute;left:13px;top:59.5px;width:173px;height:12px;background:#eeeeee"></div></div><span style="position:absolute;left:304.00px;top:520px;font-size:12.5px;line-height:16px;white-space:pre;color:#2a2a2a;font-weight:bold;letter-spacing:-0.637px;">JDBC</span><div class="btn" style="left:303px;top:543px;width:205px;height:26px"></div><span style="position:absolute;left:320.00px;top:549px;font-size:14px;line-height:18px;white-space:pre;color:#3a3a3a;letter-spacing:0.657px;"><u>C</u>onnection Pool Options</span><div class="cb dis" style="left:568px;top:544px;width:101px;height:25px"><div class="ab dis" style="width:20px"><div class="tri dis"></div></div></div><div class="a" style="left:0;top:0;width:648px;height:566px;overflow:hidden"><span style="position:absolute;left:572.50px;top:549px;font-size:14px;line-height:18px;white-space:pre;color:#a9c4e4;letter-spacing:0.356px;">Production</span></div><div class="q" style="left:675px;top:548px">?</div><span style="position:absolute;left:311.50px;top:578px;font-size:12.5px;line-height:16px;white-space:pre;color:#2a2a2a;font-weight:bold;letter-spacing:1.273px;">Database Configuration</span><span style="position:absolute;left:313.00px;top:602px;font-size:14px;line-height:18px;white-space:pre;color:#3a3a3a;letter-spacing:0.047px;">Driver :</span><div class="cb dis" style="left:431px;top:597px;width:227px;height:25px"><div class="ab dis" style="width:19px"><div class="tri dis"></div></div></div><div class="a" style="left:0;top:0;width:638px;height:619px;overflow:hidden"><span style="position:absolute;left:435.50px;top:602px;font-size:14px;line-height:18px;white-space:pre;color:#a9c4e4;letter-spacing:0.473px;">PostgreSQL</span></div><div style="position:absolute;left:658px;top:597px;width:30px;height:25px;background:#eeeeee;border:1px solid #999"></div><svg class="a" style="left:664px;top:603px" width="18" height="14" viewBox="0 0 18 14"><path d="M.8 5L5 .8 9 4.800 13 .8 17.200 5 9 13.200z" fill="#c6c6c6"/></svg><span style="position:absolute;left:313.00px;top:631px;font-size:14px;line-height:18px;white-space:pre;color:#3a3a3a;letter-spacing:0.315px;">Driver file :</span><div style="position:absolute;left:431px;top:624px;width:215px;height:27.5px;background:#fff;border:1px solid #b8cfe5;overflow:hidden"></div><span style="position:absolute;left:433.50px;top:631px;font-size:14px;line-height:18px;white-space:pre;color:#a9c4e4;letter-spacing:0.748px;">ads/postgresql-9.1-903.jdbc4.j</span><div style="position:absolute;left:646.5px;top:624px;width:25px;height:27.5px;background:#eeeeee;border:1px solid #999"></div><svg class="a" style="left:652px;top:629px" width="14" height="18" viewBox="0 0 14 18"><path d="M5 1h4v8h4l-6 6-6-6h4z" fill="#c4c4c4"/><rect x="1" y="16" width="12" height="1.200" fill="#c4c4c4"/></svg><div style="position:absolute;left:672px;top:624px;width:16px;height:27.5px;background:#eeeeee;border:1px solid #999"></div><div style="position:absolute;left:676.5px;top:636px;width:0px;height:0px;border-left:3.500px solid transparent;border-right:3.500px solid transparent;border-top:4px solid #555"></div><span style="position:absolute;left:313.00px;top:657px;font-size:14px;line-height:18px;white-space:pre;color:#3a3a3a;letter-spacing:0.251px;">Connection URL :</span><div style="position:absolute;left:431px;top:654px;width:257px;height:20px;background:#fff;border:1px solid #b8cfe5"></div><div class="a" style="left:432px;top:655px;width:255px;height:18px;overflow:hidden"><span style="position:absolute;left:0.00px;top:2px;font-size:14px;line-height:18px;white-space:pre;color:#a9c4e4;letter-spacing:0.558px;">stgresql://192.168.1.27/GNU_academ</span></div><div style="position:absolute;left:431px;top:676.5px;width:87px;height:8px;background:#fff;border:1px solid #b8cfe5;border-bottom:none"></div><div style="position:absolute;left:601px;top:676.5px;width:87px;height:8px;background:#fff;border:1px solid #b8cfe5;border-bottom:none"></div><div style="position:absolute;left:313px;top:682px;width:1.5px;height:2px;background:#777"></div><div style="position:absolute;left:319px;top:682px;width:1.5px;height:2px;background:#777"></div><div style="position:absolute;left:523px;top:682px;width:1.5px;height:2px;background:#777"></div><div style="position:absolute;left:524px;top:682px;width:5px;height:1px;background:#999"></div><div style="position:absolute;left:440px;top:682px;width:1px;height:2px;background:#c9daee"></div><div style="position:absolute;left:452px;top:682px;width:1px;height:2px;background:#c9daee"></div><div style="position:absolute;left:459px;top:682px;width:1px;height:2px;background:#c9daee"></div><div style="position:absolute;left:471px;top:682px;width:1px;height:2px;background:#c9daee"></div><div style="position:absolute;left:478px;top:682px;width:1px;height:2px;background:#c9daee"></div><div style="position:absolute;left:490px;top:682px;width:1px;height:2px;background:#c9daee"></div><div style="position:absolute;left:705px;top:520.5px;width:14px;height:163px;background:#eeeeee;border-left:1px solid #8a9bb2"></div><div style="position:absolute;left:705px;top:520.5px;width:14px;height:15px;background:linear-gradient(90deg,#ffffff,#eef2f7 60%,#dfe8f2);border:1px solid #8a9bb2;border-top:none;border-right:none"></div><div style="position:absolute;left:708px;top:525px;width:0px;height:0px;border-left:4.500px solid transparent;border-right:4.500px solid transparent;border-bottom:5px solid #222"></div><div style="position:absolute;left:705px;top:535px;width:14px;height:99px;background:linear-gradient(90deg,#e4eef9 0%,#ffffff 30%,#dce8f5 65%,#b9d0ea 100%);border:1px solid #6f8cc6"></div><div style="position:absolute;left:708px;top:581px;width:9px;height:1px;background:#6f8fc6"></div><div style="position:absolute;left:708px;top:584px;width:9px;height:1px;background:#6f8fc6"></div><div style="position:absolute;left:708px;top:587px;width:9px;height:1px;background:#6f8fc6"></div><div style="position:absolute;left:705px;top:668.5px;width:14px;height:15px;background:linear-gradient(90deg,#ffffff,#eef2f7 60%,#dfe8f2);border:1px solid #8a9bb2;border-bottom:none;border-right:none"></div><div style="position:absolute;left:708px;top:674px;width:0px;height:0px;border-left:4.500px solid transparent;border-right:4.500px solid transparent;border-top:5px solid #222"></div><div class="btn" style="left:488px;top:701px;width:75px;height:26px"></div><span style="position:absolute;left:515.50px;top:707px;font-size:14px;line-height:18px;white-space:pre;color:#3a3a3a;letter-spacing:-0.117px;"><u>O</u>K</span><div class="btn" style="left:568px;top:701px;width:78px;height:26px"></div><span style="position:absolute;left:586.50px;top:707px;font-size:14px;line-height:18px;white-space:pre;color:#3a3a3a;letter-spacing:-0.266px;">Cancel</span><div class="btn" style="left:651px;top:701px;width:75px;height:26px"></div><span style="position:absolute;left:672.50px;top:707px;font-size:14px;line-height:18px;white-space:pre;color:#3a3a3a;letter-spacing:0.422px;"><u>H</u>elp</span><svg class="a" style="left:444px;top:266px" width="14" height="21" viewBox="0 0 14 21"><path d="M1 1v15.500l3.800-3.500 2.700 6.200 2.600-1.100-2.700-6h5.100z" fill="#111" stroke="#fff" stroke-width="1.100"/></svg></div></body></html>
